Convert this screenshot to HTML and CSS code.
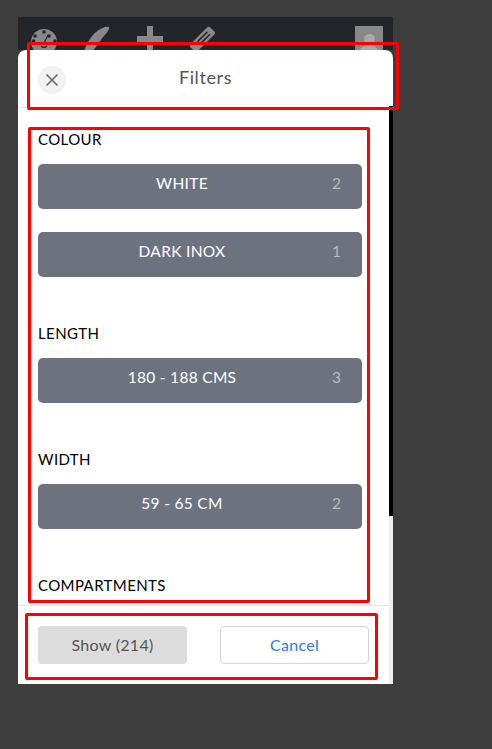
FILE: index.html
```html
<!DOCTYPE html>
<html>
<head>
  <title>Filters</title>
  <link rel="stylesheet" href="styles.css">
</head>
<body>

<div class="frame">
  <!-- Top nav, mostly hidden by the modal -->
  <div class="nav">
    <svg class="nav-icon" width="26" height="26" viewBox="0 0 26 26">
      <circle cx="13" cy="16" r="13" fill="#888"/>
      <circle cx="13" cy="6" r="1.800" fill="#22262a"/>
      <circle cx="18" cy="10" r="1.800" fill="#22262a"/>
      <circle cx="4" cy="10" r="1.800" fill="#22262a"/>
      <circle cx="2.500" cy="15" r="1.800" fill="#22262a"/>
      <circle cx="24" cy="15" r="1.800" fill="#22262a"/>
      <path d="M13 17 L17 9" stroke="#22262a" stroke-width="1.300"/>
      <path d="M10 20 Q13 23 16 20" stroke="#22262a" stroke-width="1.300" fill="none"/>
    </svg>
    <svg class="nav-icon" width="26" height="26" viewBox="0 0 26 26">
      <path d="M25 1 C26 3 22 8 19 11 L14 18 L8 26 L0 26 C2 18 8 9 12 6 C17 2 22 0 25 1 Z" fill="#888"/>
    </svg>
    <svg class="nav-icon" width="26" height="26" viewBox="0 0 26 26">
      <path d="M10 0 H16 V10 H26 V17 H16 V26 H10 V17 H0 V10 H10 Z" fill="#888"/>
    </svg>
    <svg class="nav-icon" width="26" height="26" viewBox="0 0 26 26">
      <g transform="rotate(45 12 13)">
        <rect x="7.500" y="-1" width="10" height="28" rx="2" fill="#888"/>
        <rect x="10" y="4" width="1.500" height="14" fill="#22262a"/>
        <rect x="13.500" y="4" width="1.500" height="14" fill="#22262a"/>
      </g>
    </svg>
    <div class="avatar">
      <span class="avatar-head"></span>
      <span class="avatar-body"></span>
    </div>
  </div>

  <!-- Filters modal -->
  <div class="modal">
    <div class="modal-header">
      <button class="close-btn">
        <svg width="14" height="14" viewBox="0 0 14 14">
          <path d="M1.500 1.500 L12.500 12.500 M12.500 1.500 L1.500 12.500" stroke="#666" stroke-width="1.500"/>
        </svg>
      </button>
      <div class="modal-title">Filters</div>
    </div>

    <div class="modal-main">
      <div class="modal-content">
        <div class="filters">
          <div class="filter-group">
            <div class="filter-label">COLOUR</div>
            <div class="filter-option"><span class="option-name">WHITE</span><span class="option-count">2</span></div>
            <div class="filter-option"><span class="option-name">DARK INOX</span><span class="option-count">1</span></div>
          </div>
          <div class="filter-group">
            <div class="filter-label">LENGTH</div>
            <div class="filter-option"><span class="option-name">180 - 188 CMS</span><span class="option-count">3</span></div>
          </div>
          <div class="filter-group">
            <div class="filter-label">WIDTH</div>
            <div class="filter-option"><span class="option-name">59 - 65 CM</span><span class="option-count">2</span></div>
          </div>
          <div class="filter-group">
            <div class="filter-label">COMPARTMENTS</div>
          </div>
        </div>

        <div class="modal-footer">
          <button class="btn btn-show">Show (214)</button>
          <button class="btn btn-cancel">Cancel</button>
        </div>
      </div>
      <div class="scroll-track"><div class="scroll-thumb"></div></div>
    </div>
  </div>
</div>

<!-- Red annotation boxes drawn over the screenshot -->
<div class="mark mark-header"></div>
<div class="mark mark-body"></div>
<div class="mark mark-footer"></div>

</body>
</html>
```

FILE: styles.css
```css
* {
  box-sizing: border-box;
}
html, body {
  height: 100%;
}
body {
  margin: 0;
  background: #3d3d3d;
  font-family: 'Lato', sans-serif;
  overflow: hidden;
  position: relative;
}
button {
  font-family: inherit;
  cursor: pointer;
}
.frame {
  width: 375px;
  margin: 17px 0 0 18px;
}
.nav {
  display: flex;
  align-items: flex-start;
  gap: 27px;
  height: 33px;
  padding: 9px 10px 0 13px;
  background: #22262a;
  overflow: hidden;
}
.nav-icon {
  flex: none;
}
.avatar {
  display: flex;
  flex-direction: column;
  align-items: center;
  flex: none;
  width: 28px;
  height: 28px;
  margin-left: auto;
  padding-top: 8px;
  background: #888;
}
.avatar-head {
  width: 11px;
  height: 11px;
  border-radius: 50%;
  background: #a8a8a8;
}
.avatar-body {
  width: 20px;
  height: 10px;
  margin-top: 1px;
  border-radius: 10px 10px 0 0;
  background: #a8a8a8;
}
.modal {
  display: flex;
  flex-direction: column;
  height: 634px;
  background: #fff;
  border-radius: 8px 8px 0 0;
  overflow: hidden;
}
.modal-header {
  display: grid;
  grid-template-columns: 28px 1fr 28px;
  align-items: center;
  height: 56px;
  padding: 15px 20px 13px;
  flex: none;
}
.close-btn {
  display: flex;
  align-items: center;
  justify-content: center;
  width: 28px;
  height: 28px;
  padding: 0;
  border: none;
  border-radius: 50%;
  background: #f2f2f2;
}
.modal-title {
  padding-bottom: 5px;
  font-size: 18px;
  line-height: 24px;
  letter-spacing: 0.6px;
  color: #555;
  text-align: center;
}
.modal-main {
  display: flex;
  flex: 1;
  min-height: 0;
}
.modal-content {
  display: flex;
  flex-direction: column;
  flex: 1;
  min-width: 0;
}
.scroll-track {
  flex: none;
  width: 4px;
  background: #eee;
}
.scroll-thumb {
  height: 410px;
  background: #000;
}
.filters {
  flex: 1;
  min-height: 0;
  margin-top: 1px;
  padding: 21px 27px 0 20px;
  border-top: 1px solid #e8e8e8;
  overflow: hidden;
}
.filter-group {
  padding-bottom: 23px;
}
.filter-label {
  margin-bottom: 14px;
  padding-top: 0;
  font-size: 15px;
  line-height: 21px;
  letter-spacing: 0.4px;
  color: #000;
}
.filter-option {
  display: flex;
  height: 45px;
  margin-bottom: 23px;
  padding-top: 9px;
  background: #6c737f;
  border-radius: 5px;
  font-size: 15.5px;
  line-height: 20px;
  letter-spacing: 0.3px;
  color: #fff;
}
.option-name {
  flex: 1;
  text-align: center;
}
.option-count {
  width: 36px;
  padding-left: 6px;
  color: #b4b8bf;
}
.modal-footer {
  display: flex;
  flex: none;
  justify-content: space-between;
  padding: 20px;
  background: #fff;
  border-top: 1px solid #e4e4e4;
}
.btn {
  width: 149px;
  height: 38px;
  padding: 0 0 2px;
  border-radius: 4px;
  font-size: 16px;
  letter-spacing: 0.3px;
}
.btn-show {
  background: #dcdcdc;
  border: none;
  color: #555;
}
.btn-cancel {
  background: #fff;
  border: 1px solid #d4d4d4;
  color: #2f7bd0;
}
.mark {
  position: absolute;
  border: 3px solid #f00;
  border-radius: 2px;
  pointer-events: none;
}
.mark-header {
  left: 27px;
  top: 42px;
  width: 372px;
  height: 68px;
}
.mark-body {
  left: 28px;
  top: 127px;
  width: 342px;
  height: 476px;
}
.mark-footer {
  left: 25px;
  top: 613px;
  width: 353px;
  height: 67px;
}
```
